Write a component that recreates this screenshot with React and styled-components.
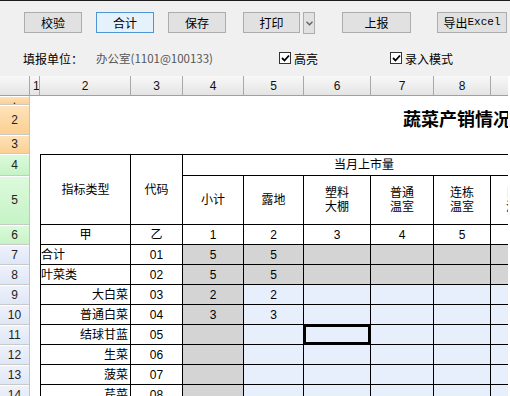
import React from "react";
import styled, { createGlobalStyle } from "styled-components";

const GlobalStyle = createGlobalStyle`
  html, body { margin: 0; padding: 0; background: #fff; overflow: hidden; }
  body {
    font-family: "Liberation Sans", "Noto Sans CJK SC", sans-serif;
    font-size: 12px;
    color: #000;
  }
  * { box-sizing: border-box; }
`;

const Page = styled.div`
  width: 510px;
  height: 396px;
  overflow: hidden;
  display: flex;
  flex-direction: column;
`;

const Toolbar = styled.div`
  height: 76px;
  flex: none;
  border-top: 1px solid #1c1c1c;
  background: #f0f0f0;
  display: flex;
  flex-direction: column;
  padding-top: 11px;
`;

const ButtonRow = styled.div`
  display: flex;
  align-items: flex-start;
  padding-left: 24px;
`;

const Button = styled.button`
  width: ${(p) => p.$w}px;
  height: ${(p) => (p.$tall ? 22 : 21)}px;
  margin: 0 0 0 ${(p) => p.$ml || 0}px;
  padding: 0;
  border: 1px solid ${(p) => (p.$active ? "#4f94d4" : "#adadad")};
  background: ${(p) => (p.$active ? "#e5f1fb" : "#e1e1e1")};
  font-family: "Noto Sans CJK SC", sans-serif;
  font-size: 12px;
  color: #000;
  display: flex;
  align-items: center;
  justify-content: center;
  line-height: 1;
`;

const Mono = styled.span`
  font-family: "Liberation Mono", monospace;
  font-size: 11px;
`;

const InfoRow = styled.div`
  display: flex;
  align-items: center;
  height: 20px;
  margin-top: 14px;
  padding-left: 23px;
`;

const Field = styled.div`
  width: ${(p) => p.$w}px;
  flex: none;
  display: flex;
  align-items: center;
  gap: 3px;
  font-family: "Noto Sans CJK SC", sans-serif;
  font-size: ${(p) => p.$size || 12}px;
  color: ${(p) => p.$color || "#000"};
  white-space: nowrap;
`;

const Box = styled.span`
  width: 12px;
  height: 12px;
  border: 1px solid #333;
  background: #fff;
  display: inline-flex;
  align-items: center;
  justify-content: center;
`;

const Viewport = styled.div`
  width: 508px;
  flex: 1;
  overflow: hidden;
  background: #fff;
`;

const Grid = styled.div`
  display: grid;
  width: 545px;
  grid-template-columns: 30px 10px 91px 52px 61px 60px 67px 63px 57px 55px;
  grid-template-rows: 20px 9px 30px 19px 22px 49px 20px repeat(8, 20px);
  font-family: "Liberation Sans", "Noto Sans CJK SC", sans-serif;
  font-size: 12px;
`;

const HeadCell = styled.div`
  grid-row: 1;
  grid-column: ${(p) => p.$col};
  background: linear-gradient(#f8f8f8, #e4e4e4);
  border-right: 1px solid #a8a8a8;
  border-bottom: 1px solid #a0a0a0;
  display: flex;
  align-items: center;
  justify-content: ${(p) => (p.$left ? "flex-start" : "center")};
  padding-left: ${(p) => (p.$left ? 3 : 0)}px;
  color: #111;
  overflow: hidden;
`;

const tones = {
  orange: "linear-gradient(#fee3ba, #fbd092)",
  green: "linear-gradient(#dcfadc, #c6f3c6)",
  blue: "linear-gradient(#eef2fb, #dfe7f6)",
};

const RowHead = styled.div`
  grid-column: 1;
  grid-row: ${(p) => p.$row};
  background: ${(p) => tones[p.$tone]};
  border-right: 1px solid #c4c4c4;
  border-bottom: 1px solid #c9c9c9;
  box-shadow: inset 0 1px 0 #fff;
  display: flex;
  align-items: center;
  justify-content: center;
  color: #222;
  overflow: hidden;
  line-height: 1;
`;

const Title = styled.div`
  grid-row: 3;
  grid-column: 3 / span 8;
  display: flex;
  align-items: center;
  padding: 0 0 4px 363px;
  font-family: "Noto Sans CJK SC", sans-serif;
  font-weight: 700;
  font-size: 18px;
  white-space: nowrap;
  overflow: hidden;
`;

const Cell = styled.div`
  grid-row: ${(p) => p.$row} / span ${(p) => p.$rs || 1};
  grid-column: ${(p) => p.$col} / span ${(p) => p.$cs || 1};
  background: ${(p) => p.$bg || "#fff"};
  border-right: 1px solid #000;
  border-bottom: 1px solid #000;
  border-top: ${(p) => (p.$bt ? "1px solid #000" : "none")};
  border-left: ${(p) => (p.$bl ? "1px solid #000" : "none")};
  box-shadow: ${(p) => (p.$sel ? "inset 0 0 0 2px #000" : "none")};
  display: flex;
  align-items: center;
  justify-content: ${(p) =>
    p.$align === "left" ? "flex-start" : p.$align === "right" ? "flex-end" : "center"};
  padding: 0 ${(p) => (p.$align === "right" ? 2 : 0)}px 0 0;
  text-align: center;
  white-space: pre-line;
  line-height: 14px;
  overflow: hidden;
`;

const GRAY = "#d4d4d4";
const BLUE = "#e7eefc";

const dataRows = [
  { label: "合计", align: "left", code: "01", vals: ["5", "5"], allGray: true },
  { label: "叶菜类", align: "left", code: "02", vals: ["5", "5"], allGray: true },
  { label: "大白菜", align: "right", code: "03", vals: ["2", "2"] },
  { label: "普通白菜", align: "right", code: "04", vals: ["3", "3"] },
  { label: "结球甘蓝", align: "right", code: "05", vals: ["", ""], sel: 2 },
  { label: "生菜", align: "right", code: "06", vals: ["", ""] },
  { label: "菠菜", align: "right", code: "07", vals: ["", ""] },
  { label: "芹菜", align: "right", code: "08", vals: ["", ""] },
];

const subHeads = ["小计", "露地", "塑料\n大棚", "普通\n温室", "连栋\n温室", "日光\n温室"];

const Check = () => (
  <Box>
    <svg width="9" height="8" viewBox="0 0 9 8">
      <path d="M1 4 L3.5 6.5 L8 1.5" fill="none" stroke="#000" strokeWidth="1.8" />
    </svg>
  </Box>
);

export default function App() {
  const rowTones = [
    "orange", "orange", "orange", "green", "green", "green",
    "blue", "blue", "blue", "blue", "blue", "blue", "blue", "blue",
  ];
  return (
    <Page>
      <GlobalStyle />
      <Toolbar>
        <ButtonRow>
          <Button $w={58}>校验</Button>
          <Button $w={58} $ml={14} $active>合计</Button>
          <Button $w={58} $ml={14}>保存</Button>
          <Button $w={57} $ml={17}>打印</Button>
          <Button $w={12} $ml={3} $tall>
            <svg width="7" height="5" viewBox="0 0 7 5">
              <path d="M0.5 0.8 L3.5 3.8 L6.5 0.8" fill="none" stroke="#606060" strokeWidth="1.3" />
            </svg>
          </Button>
          <Button $w={69} $ml={27}>上报</Button>
          <Button $w={70} $ml={26}>
            导出<Mono>Excel</Mono>
          </Button>
        </ButtonRow>
        <InfoRow>
          <Field $w={73}>填报单位：</Field>
          <Field $w={183} $color="#555" $size={11.5}>办公室(1101@100133)</Field>
          <Field $w={111}>
            <Check />
            高亮
          </Field>
          <Field $w={100}>
            <Check />
            录入模式
          </Field>
        </InfoRow>
      </Toolbar>
      <Viewport>
        <Grid>
          <HeadCell $col={1} />
          <HeadCell $col={2} $left>1</HeadCell>
          {[2, 3, 4, 5, 6, 7, 8, 9].map((n) => (
            <HeadCell key={n} $col={n + 1}>{n}</HeadCell>
          ))}
          {rowTones.map((t, i) => (
            <RowHead key={i} $row={i + 2} $tone={t}>
              {i === 0 ? "." : i + 1}
            </RowHead>
          ))}

          <Title>蔬菜产销情况表</Title>

          <Cell $row={5} $rs={2} $col={3} $bt $bl>指标类型</Cell>
          <Cell $row={5} $rs={2} $col={4} $bt>代码</Cell>
          <Cell $row={5} $col={5} $cs={6} $bt>当月上市量</Cell>
          {subHeads.map((h, i) => (
            <Cell key={h + i} $row={6} $col={5 + i}>{h}</Cell>
          ))}

          <Cell $row={7} $col={3} $bl>甲</Cell>
          <Cell $row={7} $col={4}>乙</Cell>
          {[1, 2, 3, 4, 5, 6].map((n) => (
            <Cell key={n} $row={7} $col={4 + n}>{n}</Cell>
          ))}

          {dataRows.map((r, i) => {
            const row = 8 + i;
            return (
              <React.Fragment key={r.code}>
                <Cell $row={row} $col={3} $bl $align={r.align}>{r.label}</Cell>
                <Cell $row={row} $col={4}>{r.code}</Cell>
                <Cell $row={row} $col={5} $bg={GRAY}>{r.vals[0]}</Cell>
                <Cell $row={row} $col={6} $bg={r.allGray ? GRAY : BLUE}>{r.vals[1]}</Cell>
                {[7, 8, 9, 10].map((c) => (
                  <Cell
                    key={c}
                    $row={row}
                    $col={c}
                    $bg={r.allGray ? GRAY : BLUE}
                    $sel={r.sel === 2 && c === 7}
                  />
                ))}
              </React.Fragment>
            );
          })}
        </Grid>
      </Viewport>
    </Page>
  );
}
